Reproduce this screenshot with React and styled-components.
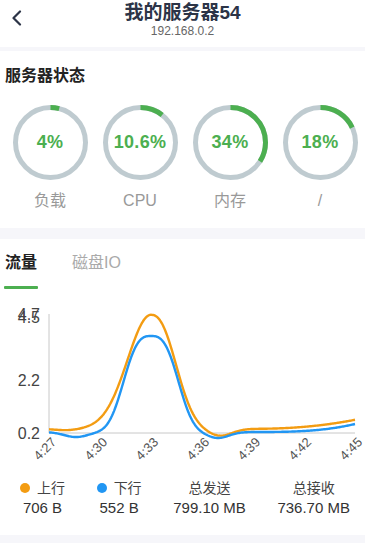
import React from "react";
import styled, { createGlobalStyle } from "styled-components";

const GlobalStyle = createGlobalStyle`
  html, body { margin: 0; padding: 0; background: #f6f6fa; }
  body { font-family: "Liberation Sans", "Noto Sans CJK SC", sans-serif; }
  * { box-sizing: border-box; }
`;

const Page = styled.div`
  width: 365px;
  min-height: 543px;
  background: #f6f6fa;
`;

const Header = styled.header`
  height: 47px;
  background: #fff;
  display: grid;
  grid-template-columns: 40px 1fr 40px;
  align-items: start;
`;

const BackButton = styled.div`
  padding: 10px 0 0 11px;
  display: flex;
`;

const TitleBlock = styled.div`
  text-align: center;
  padding-top: 2px;
`;

const Title = styled.div`
  font-size: 19px;
  line-height: 22px;
  font-weight: 700;
  color: #2c3447;
`;

const Subtitle = styled.div`
  font-size: 12px;
  line-height: 14px;
  color: #666;
`;

const Card = styled.section`
  background: #fff;
  margin-top: ${(p) => p.$gap}px;
  padding: ${(p) => p.$padTop}px 0 17px;
`;

const SectionTitle = styled.div`
  padding-left: 5px;
  font-size: 16px;
  line-height: 20px;
  font-weight: 700;
  color: #222;
`;

const RingGrid = styled.div`
  margin-top: 19px;
  padding-left: 5px;
  display: grid;
  grid-template-columns: repeat(4, 90px);
`;

const RingItem = styled.div`
  display: flex;
  flex-direction: column;
  align-items: center;
`;

const RingBox = styled.div`
  width: 75px;
  height: 75px;
  display: grid;
  place-items: center;
  & > * { grid-area: 1 / 1; }
`;

const RingValue = styled.span`
  font-size: 18px;
  font-weight: 700;
  color: #4caf50;
  letter-spacing: 0.3px;
`;

const RingLabel = styled.div`
  margin-top: 11px;
  font-size: 16px;
  line-height: 20px;
  color: #999;
`;

const Tabs = styled.div`
  display: flex;
  padding-left: 4px;
  gap: 33px;
`;

const Tab = styled.div`
  display: flex;
  flex-direction: column;
  padding: 0 1px;
  font-size: 16px;
  line-height: 20px;
  font-weight: ${(p) => (p.$active ? 700 : 400)};
  color: ${(p) => (p.$active ? "#222" : "#aaa")};
  &::after {
    content: "";
    display: block;
    height: 3px;
    margin: 13px -1px 0;
    border-radius: 1px;
    background: ${(p) => (p.$active ? "#4caf50" : "transparent")};
  }
`;

const ChartWrap = styled.div`
  margin-top: 11px;
  height: 170px;
  display: flex;
`;

const Legend = styled.div`
  margin-top: 8px;
  display: flex;
  justify-content: space-between;
  padding: 0 15px 0 20px;
`;

const LegendItem = styled.div`
  display: flex;
  flex-direction: column;
  align-items: center;
  color: #333;
`;

const LegendLabel = styled.div`
  display: flex;
  align-items: center;
  font-size: 14px;
  line-height: 20px;
  color: #444;
`;

const Dot = styled.span`
  width: 10px;
  height: 10px;
  border-radius: 50%;
  background: ${(p) => p.$color};
  margin-right: 7px;
`;

const LegendValue = styled.div`
  font-size: 15px;
  line-height: 20px;
`;

function Ring({ value, label }) {
  const r = 35;
  const c = 2 * Math.PI * r;
  const len = (value / 100) * c;
  return (
    <RingItem>
      <RingBox>
        <svg width="75" height="75" viewBox="0 0 75 75">
          <circle cx="37.5" cy="37.5" r={r} fill="none" stroke="#bfcbd0" strokeWidth="5" />
          <circle
            cx="37.5"
            cy="37.5"
            r={r}
            fill="none"
            stroke="#4caf50"
            strokeWidth="5"
            strokeDasharray={`${len} ${c}`}
            transform="rotate(-90 37.5 37.5)"
          />
        </svg>
        <RingValue>{value}%</RingValue>
      </RingBox>
      <RingLabel>{label}</RingLabel>
    </RingItem>
  );
}

const bump = (x, c, s, p = 2) => Math.exp(-Math.pow(Math.abs(x - c) / s, p) / 2);

function orangeY(x) {
  let base = 428.8 + 1.5 * bump(x, 67, 12);
  if (x > 253) base -= 9 * Math.pow((x - 253) / 102, 2.2);
  const v = x < 151 ? bump(x, 151, 23.4, 2) : bump(x, 151, 23.6, 2.4);
  return base - 114 * v + 7 * bump(x, 220, 12);
}

function blueY(x) {
  let base = 432 + 5 * bump(x, 76, 12);
  if (x > 253) base -= 8 * Math.pow((x - 253) / 102, 3);
  return base - 96 * bump(x, 151, 25.2, 2.9) + 6 * bump(x, 218, 11);
}

function linePath(fn) {
  let d = "";
  for (let x = 49; x <= 355; x += 1) {
    d += `${x === 49 ? "M" : "L"}${x},${(fn(x) - 300).toFixed(2)} `;
  }
  return d;
}

const ticks = ["4:27", "4:30", "4:33", "4:36", "4:39", "4:42", "4:45"];

function Chart() {
  return (
    <svg width="365" height="170" viewBox="0 0 365 170">
      <line x1="49" y1="14" x2="49" y2="133" stroke="#c8c8c8" strokeWidth="1" />
      <line x1="49" y1="133" x2="355" y2="133" stroke="#c8c8c8" strokeWidth="1" />
      <g fontFamily="Liberation Sans, sans-serif" fontSize="16" fill="#444" textAnchor="end">
        <text x="40" y="20">4.7</text>
        <text x="40" y="23">4.5</text>
        <text x="40" y="85.5">2.2</text>
        <text x="40" y="138.5">0.2</text>
      </g>
      <g fontFamily="Liberation Sans, sans-serif" fontSize="13" fill="#555" textAnchor="end">
        {ticks.map((t, i) => {
          const x = 49 + i * 51 + 8;
          return (
            <text key={t} transform={`translate(${x} 143) rotate(-45)`}>
              {t}
            </text>
          );
        })}
      </g>
      <path d={linePath(orangeY)} fill="none" stroke="#f39c12" strokeWidth="2.4" strokeLinejoin="round" />
      <path d={linePath(blueY)} fill="none" stroke="#2196f3" strokeWidth="2.4" strokeLinejoin="round" />
    </svg>
  );
}

export default function App() {
  return (
    <Page>
      <GlobalStyle />
      <Header>
        <BackButton>
          <svg width="11" height="16" viewBox="0 0 11 16">
            <path d="M9 1.5 L2.5 8 L9 14.5" fill="none" stroke="#2c3447" strokeWidth="2.2" strokeLinecap="round" strokeLinejoin="round" />
          </svg>
        </BackButton>
        <TitleBlock>
          <Title>我的服务器54</Title>
          <Subtitle>192.168.0.2</Subtitle>
        </TitleBlock>
        <div />
      </Header>

      <Card $gap={4} $padTop={15}>
        <SectionTitle>服务器状态</SectionTitle>
        <RingGrid>
          <Ring value={4} label="负载" />
          <Ring value={10.6} label="CPU" />
          <Ring value={34} label="内存" />
          <Ring value={18} label="/" />
        </RingGrid>
      </Card>

      <Card $gap={11} $padTop={14}>
        <Tabs>
          <Tab $active>流量</Tab>
          <Tab>磁盘IO</Tab>
        </Tabs>
        <ChartWrap>
          <Chart />
        </ChartWrap>
        <Legend>
          <LegendItem>
            <LegendLabel><Dot $color="#f39c12" />上行</LegendLabel>
            <LegendValue>706 B</LegendValue>
          </LegendItem>
          <LegendItem>
            <LegendLabel><Dot $color="#2196f3" />下行</LegendLabel>
            <LegendValue>552 B</LegendValue>
          </LegendItem>
          <LegendItem>
            <LegendLabel>总发送</LegendLabel>
            <LegendValue>799.10 MB</LegendValue>
          </LegendItem>
          <LegendItem>
            <LegendLabel>总接收</LegendLabel>
            <LegendValue>736.70 MB</LegendValue>
          </LegendItem>
        </Legend>
      </Card>
    </Page>
  );
}
